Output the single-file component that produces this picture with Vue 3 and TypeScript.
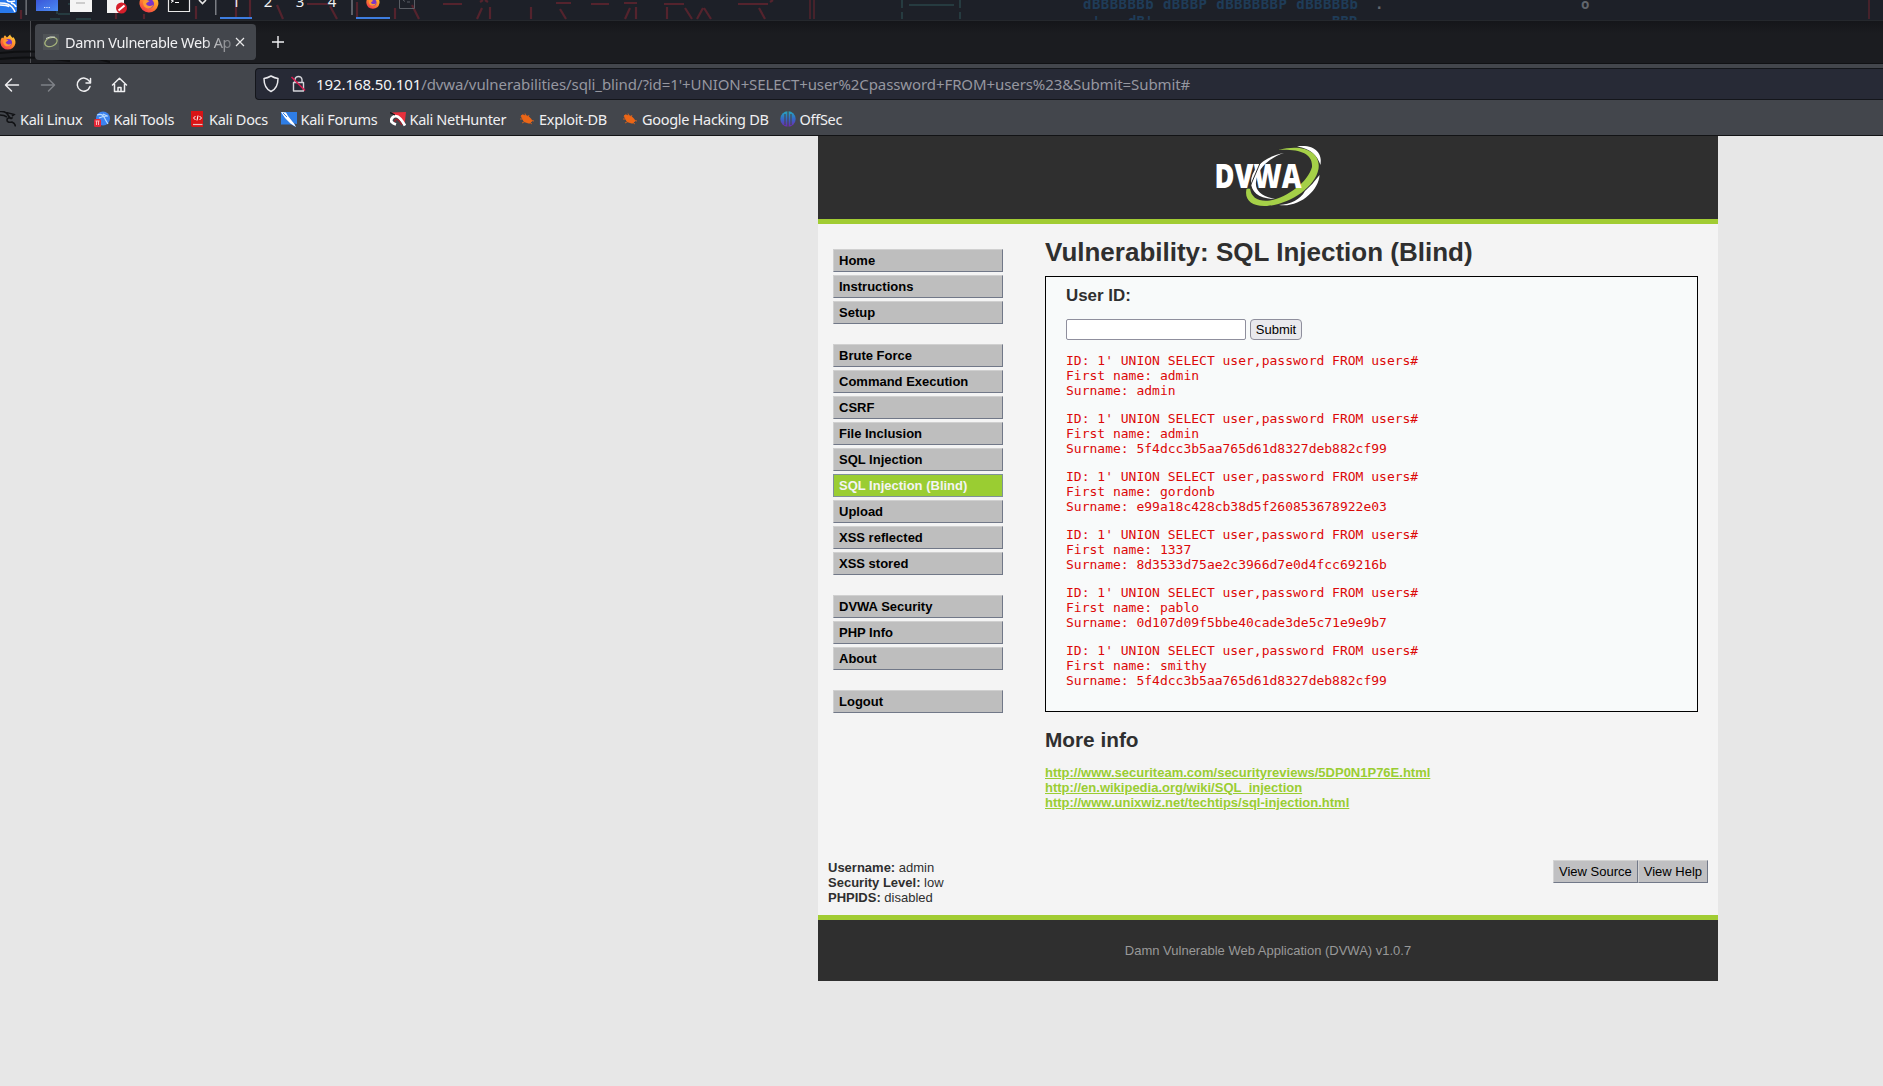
<script setup lang="ts">
interface Bookmark {
  icon: string
  label: string
  width: number
}
interface Row {
  first: string
  surname: string
}

const bookmarks: Bookmark[] = [
  { icon: 'dragon', label: 'Kali Linux', width: 93.5 },
  { icon: 'tools', label: 'Kali Tools', width: 95.5 },
  { icon: 'docs', label: 'Kali Docs', width: 91.5 },
  { icon: 'forums', label: 'Kali Forums', width: 109 },
  { icon: 'nethunter', label: 'Kali NetHunter', width: 129.5 },
  { icon: 'bug', label: 'Exploit-DB', width: 103 },
  { icon: 'bug', label: 'Google Hacking DB', width: 157.5 },
  { icon: 'offsec', label: 'OffSec', width: 64 },
]

const menu: string[][] = [
  ['Home', 'Instructions', 'Setup'],
  ['Brute Force', 'Command Execution', 'CSRF', 'File Inclusion', 'SQL Injection', 'SQL Injection (Blind)', 'Upload', 'XSS reflected', 'XSS stored'],
  ['DVWA Security', 'PHP Info', 'About'],
  ['Logout'],
]
const selected = 'SQL Injection (Blind)'

const rows: Row[] = [
  { first: 'admin', surname: 'admin' },
  { first: 'admin', surname: '5f4dcc3b5aa765d61d8327deb882cf99' },
  { first: 'gordonb', surname: 'e99a18c428cb38d5f260853678922e03' },
  { first: '1337', surname: '8d3533d75ae2c3966d7e0d4fcc69216b' },
  { first: 'pablo', surname: '0d107d09f5bbe40cade3de5c71e9e9b7' },
  { first: 'smithy', surname: '5f4dcc3b5aa765d61d8327deb882cf99' },
]

const links: string[] = [
  'http://www.securiteam.com/securityreviews/5DP0N1P76E.html',
  'http://en.wikipedia.org/wiki/SQL_injection',
  'http://www.unixwiz.net/techtips/sql-injection.html',
]
</script>

<template>
  <div class="screen">
    <svg width="0" height="0" class="defs" aria-hidden="true">
      <defs>
        <linearGradient id="fox" x1="0.8" y1="0" x2="0.2" y2="1">
          <stop offset="0" stop-color="#ffd43a" />
          <stop offset="0.5" stop-color="#ff8a2a" />
          <stop offset="1" stop-color="#f0304e" />
        </linearGradient>
        <linearGradient id="sea" x1="0" y1="0" x2="0" y2="1">
          <stop offset="0" stop-color="#25a8bd" />
          <stop offset="0.5" stop-color="#3568c8" />
          <stop offset="1" stop-color="#7028b0" />
        </linearGradient>
        <linearGradient id="desk" x1="0" y1="0" x2="1" y2="1">
          <stop offset="0" stop-color="#3a56d8" />
          <stop offset="1" stop-color="#4b8cf4" />
        </linearGradient>
        <symbol id="firefox" viewBox="0 0 16 16">
          <path d="M5 1.2C6 2 6.3 3 7 3.4L10.2 0.6C10.5 2.4 12 3 12.6 4L13.2 3C15 5 15.8 7 15.4 9.4A7.6 7.6 0 0 1 .4 9C.2 6.6.9 5 2 3.6L3.5 4.3C3.6 3 4 2 5 1.2Z" fill="url(#fox)" />
          <circle cx="8.3" cy="8.6" r="3.7" fill="#7a35c8" />
          <path d="M3.6 6.2C5.5 5 7.5 5.6 8.4 6.8 6.8 7 6.5 8 5.6 8.6 6.6 10.6 9 11 11.4 9.4 10.6 12.2 7 13.2 4.8 11.4 3.2 10 3 8 3.6 6.2Z" fill="#ff9a32" />
        </symbol>
      </defs>
    </svg>

    <header class="panel">
      <svg class="wallpaper" width="1883" height="20" viewBox="0 0 1883 20">
        <g fill="none" stroke="#54232d" stroke-width="2.2">
          <path d="M21 10V19M116 11V19M144 14V19M196 6V19M236 0V19M250 0V19M277 5l6 14M307 4h21M330 6l7 13M357 2V19M395 8V19M412 5l7 14M443 4h19M482 8l-5 11M490 7V19M480 2l3-2M488 2l-3-2M531 7V19M556 3h15M560 9l6 10M591 4h18M630 8l-5 11M636 7V19M624 3h13M664 4h20M667 7V19M685 8l7 11M703 8l-6 11M704 8l7 11M738 4h30M759 8l6 11M770 2l3-2" />
          <path d="M810 0V19M814 0V19M1869 0V19" stroke-width="1.5" />
        </g>
        <path d="M902 0V8M902 12V19M960 0V8M960 12V19M909 5H954M57 5V14M68 4H83M50 19H60M76 19H91M58 14H70" fill="none" stroke="#263b40" stroke-width="2" />
        <g class="ascii" fill="#1f3c58">
          <text x="1083" y="8.5" textLength="275" xml:space="preserve">dBBBBBBb  dBBBP dBBBBBBP dBBBBBb</text>
          <text x="1092" y="26">'</text>
          <text x="1128" y="26">dB'</text>
          <text x="1332" y="26">BBP</text>
          <text x="1375" y="8.5" fill="#62666d">.</text>
          <text x="1581" y="8.5" fill="#62666d">o</text>
        </g>
      </svg>
      <svg class="launch" width="216" height="20" viewBox="0 0 216 20">
        <path d="M0 0H17V10Q17 13 14 13H0Z" fill="#2879ec" />
        <path d="M0 3C5 3 11 3 15 12M7 0Q8 3 15 1M11 3Q15 4 16 7M0 5Q8 5 9 7" fill="none" stroke="#fff" stroke-width="1.6" />
        <rect x="25.5" width="1.3" height="15" fill="#7a7d83" />
        <rect x="36" width="22" height="11" fill="url(#desk)" />
        <path d="M44 7.5h6" stroke="#dfe6ff" stroke-width="1.2" stroke-dasharray="1.3 1" />
        <rect x="70" width="22" height="12" fill="#f4f4f4" />
        <path d="M76 3h9" stroke="#b9b9b9" stroke-width="1.3" />
        <path d="M107 0H124V13H107Z" fill="#f4f4f4" />
        <circle cx="121.500" cy="8" r="5.500" fill="#d61f2b" />
        <path d="M118.500 10.500l6-5" stroke="#fff" stroke-width="2" />
        <use href="#firefox" x="139" y="-7" width="20" height="20" />
        <path d="M168.500-2V11.500H189.500V-2" fill="#16181b" stroke="#e8e8e8" stroke-width="1.2" />
        <path d="M171 0l2.500 1L171 2.500M175 2.500h4" fill="none" stroke="#fff" />
        <path d="M199 0l3.500 3.500L206 0" fill="none" stroke="#e6e6e6" stroke-width="1.6" />
        <rect x="215" width="1.5" height="15" fill="#7a7d83" />
      </svg>
      <nav class="spaces">
        <span class="space current">1</span>
        <span class="space">2</span>
        <span class="space">3</span>
        <span class="space">4</span>
      </nav>
      <svg class="tasks" width="70" height="20" viewBox="350 0 70 20">
        <rect x="351.300" width="1.400" height="15" fill="#7a7d83" />
        <rect x="356" y="17" width="34" height="2" fill="#3d7de0" />
        <use href="#firefox" x="366" y="-5" width="14" height="14" />
        <path d="M399.500-4V8.500H414.500V-4M403 0l2 1.500M407 2h3" fill="none" stroke="#5a5d64" />
      </svg>
    </header>

    <div class="tabbar">
      <div class="pinned">
        <svg class="shade" width="110" height="20" viewBox="0 0 110 20"><path d="M0 10Q30 7 60 10T110 19M0 16Q30 12 70 18" fill="none" stroke="#0e0f11" stroke-width="2" /></svg>
        <svg class="pin" width="16" height="16"><use href="#firefox" width="16" height="16" /></svg>
      </div>
      <div class="tab">
        <svg width="16" height="16" viewBox="0 0 16 16">
          <rect width="16" height="16" fill="#4f5356" />
          <ellipse cx="8" cy="8" rx="6.400" ry="4.300" transform="rotate(-22 8 8)" fill="none" stroke="#a5b37b" stroke-width="1.300" />
          <path d="M3 4.500Q7 2 12 3.200" fill="none" stroke="#d5d8cf" />
        </svg>
        <span class="tab-title">Damn Vulnerable Web Ap</span>
        <svg class="close" width="10" height="10" viewBox="0 0 10 10"><path d="M1 1l8 8M9 1L1 9" stroke="#e8e8ea" stroke-width="1.200" /></svg>
      </div>
      <svg class="plus" width="12" height="12" viewBox="0 0 12 12"><path d="M6 0V12M0 6H12" stroke="#f0f0f2" stroke-width="1.400" /></svg>
    </div>

    <div class="toolbar">
      <svg width="130" height="32" viewBox="0 0 130 32" fill="none" stroke="#eeeef0" stroke-width="1.500" stroke-linecap="round" stroke-linejoin="round">
        <path d="M18.500 17H6M11.500 11L5.500 17L11.500 23" />
        <path d="M41.500 17H54M48.500 11L54.500 17L48.500 23" stroke="#7e8187" />
        <path d="M89.500 13.500A6.500 6.500 0 1 0 90 18.500M90.500 10.500V15H86" />
        <path d="M112.500 17L119.500 10.300L126.500 17M114.500 16V23.500H124.500V16M118 23V19.500H121V23" />
      </svg>
      <div class="url">
        <svg width="44" height="20" viewBox="0 0 44 20" fill="none" stroke-linejoin="round">
          <path d="M7 2Q10.500 4 14 4.500C14 11 11.500 15.500 7 17.500 2.500 15.500 0 11 0 4.500Q3.500 4 7 2Z" transform="translate(1 0)" stroke="#e8e8ec" stroke-width="1.500" />
          <path d="M30.500 8.500H40.500V17H30.500ZM32 8.500V5.500Q32.500 2.500 35.500 2.500T39 5.500V8.500" stroke="#d5d5da" stroke-width="1.400" />
          <path d="M28.500 3L42 16.500" stroke="#d81c50" stroke-width="1.600" />
        </svg>
        <span class="address"><b>192.168.50.101</b>/dvwa/vulnerabilities/sqli_blind/?id=1'+UNION+SELECT+user%2Cpassword+FROM+users%23&amp;Submit=Submit#</span>
      </div>
    </div>

    <div class="bookmarks">
      <div v-for="b in bookmarks" :key="b.label" class="bookmark" :style="{ width: b.width + 'px' }">
        <svg width="16" height="16" viewBox="0 0 16 16">
          <g v-if="b.icon === 'dragon'" fill="none" stroke="#111215" stroke-width="1.600">
            <path d="M-2 1Q5-1 8 4T12 7Q7 6 7 9T12 11Q15 12 15.500 15.500M-1 4Q4 4 7 6M4 1Q9 2 14 3.500L12 5" />
          </g>
          <g v-else-if="b.icon === 'tools'">
            <circle cx="9" cy="7.500" r="7" fill="#3c82ee" />
            <path d="M3 4Q8 2 10 6T14 13M5 7Q9 5 14 5M9 3l4 2" fill="none" stroke="#b9dcff" stroke-width="1.200" />
            <rect y="8" width="7" height="8" rx="1.500" fill="#e32636" />
            <path d="M1.500 10h4M2.500 10v4M4.500 10v4" stroke="#ffb5b5" />
          </g>
          <g v-else-if="b.icon === 'docs'">
            <path d="M2 0H14V13H4V14H14V16H3.500Q2 16 2 14Z" fill="#d81416" />
            <path d="M4 13.500H13.500" stroke="#e9c0c0" stroke-width="1.200" />
            <path d="M6.500 5L4.500 7l2 2M10.500 5l2 2-2 2M9 4.500L8 9.500" fill="none" stroke="#fff" />
          </g>
          <g v-else-if="b.icon === 'forums'">
            <path d="M0 1H16V13L13 12.500 15 16 10 13.500H0Z" fill="#2f7ee6" />
            <path d="M0 1L5 1.500 7 5 13 12.500 15 16 9.500 12.500 4 7Z" fill="#fff" />
            <path d="M2 2L6 6" stroke="#2f7ee6" stroke-width="1" />
          </g>
          <g v-else-if="b.icon === 'nethunter'">
            <path d="M2 1.500L16 1L14.500 14L9 8Z" fill="#e8303c" />
            <path d="M6 13.500Q0 11.500 1.500 8Q3.500 4 7.500 5.500Q10.500 7 15 14.500" fill="none" stroke="#fff" stroke-width="2.800" />
            <path d="M5 11Q4.500 8 7.500 8.500Q9.500 9.500 12 14" fill="none" stroke="#a51d2a" stroke-width="1.300" />
            <path d="M0 1.500L5 4" stroke="#111215" stroke-width="1.200" />
          </g>
          <g v-else-if="b.icon === 'bug'" fill="#ec6616" stroke="#ec6616" stroke-width=".8">
            <path d="M2 5Q3 3 6 4.500Q11 5 13 10Q11 13.500 7.500 11.500Q4 10.500 4 8.500Z" />
            <path d="M1 8L5 8M3 12L7 10M6 2.500L7 5M10 4L9 6M10 9l5 1M10 11l3 2" fill="none" />
          </g>
          <g v-else>
            <circle cx="8" cy="8" r="7.700" fill="url(#sea)" />
            <path d="M8 0V16M5 3V14M11 3V14" stroke="#444850" stroke-width="1.200" />
          </g>
        </svg>
        <span>{{ b.label }}</span>
      </div>
    </div>

    <main class="page">
      <div class="container">
        <div class="header">
          <svg width="110" height="68" viewBox="0 0 110 68">
            <path d="M82 4.500C98 2 108 10 105.500 23C102 13 96 7 82 4.500Z" fill="#fff" />
            <path d="M63 8C90 1 106 11 103.500 27C100 45 76 62 52 64C37 65 29 58 31.500 47L35 46C36 56 44 60 55 58.500C73 55 93 40 97 25C98 11 84 7 63 8Z" fill="#a5d048" />
            <path d="M69 11C50 14 36 27 36 40C36 50 44 57 60 57C47 54 40 49 41 40C42 28 53 16 69 11Z" fill="#fff" />
            <path d="M104.500 33C104 48 85 66 64 63C76 62 85 58 90 49Q98 42 104.500 33Z" fill="#fff" />
            <text x="-0.500" y="45.500" textLength="87" lengthAdjust="spacingAndGlyphs" class="logo-text">DVWA</text>
            <path d="M34 47L46 19" stroke="#2f2f2f" stroke-width="1" />
          </svg>
        </div>

        <div class="middle">
          <aside class="menu">
            <ul v-for="(group, i) in menu" :key="i">
              <li v-for="item in group" :key="item" :class="{ selected: item === selected }">{{ item }}</li>
            </ul>
          </aside>
          <section class="body">
            <h1>Vulnerability: SQL Injection (Blind)</h1>
            <div class="vulnerable">
              <h3>User ID:</h3>
              <form class="query" @submit.prevent>
                <input type="text" aria-label="User ID" />
                <button type="submit">Submit</button>
              </form>
              <pre v-for="(r, i) in rows" :key="i">ID: 1' UNION SELECT user,password FROM users#
First name: {{ r.first }}
Surname: {{ r.surname }}</pre>
            </div>
            <h2>More info</h2>
            <div class="links">
              <a v-for="l in links" :key="l">{{ l }}</a>
            </div>
          </section>
        </div>

        <div class="system">
          <div>
            <div><b>Username:</b> admin</div>
            <div><b>Security Level:</b> low</div>
            <div><b>PHPIDS:</b> disabled</div>
          </div>
          <div class="helpers"><span>View Source</span><span>View Help</span></div>
        </div>
        <footer>Damn Vulnerable Web Application (DVWA) v1.0.7</footer>
      </div>
    </main>
  </div>
</template>

<style>
body {
  background: #e7e7e7;
  overflow: hidden;
}
</style>

<style scoped>
* {
  box-sizing: border-box;
}
.screen {
  width: 1883px;
  height: 1086px;
  overflow: hidden;
  display: flex;
  flex-direction: column;
  font-family: 'Noto Sans', sans-serif;
  font-size: 15px;
  color: #f0f0f2;
}
svg {
  flex: none;
  display: block;
}
.defs {
  position: absolute;
}
.panel {
  position: relative;
  flex: none;
  display: flex;
  height: 21px;
  background: #1d2028;
  border-bottom: 1px solid #25282d;
  overflow: hidden;
}
.wallpaper {
  position: absolute;
  left: 0;
  top: 0;
}
.ascii {
  font-family: 'DejaVu Sans Mono', monospace;
  font-size: 14px;
  font-weight: bold;
}
.launch,
.spaces,
.tasks {
  position: relative;
}
.launch {
  overflow: visible;
  margin-right: 4px;
}
.spaces {
  display: flex;
  width: 130px;
}
.space {
  flex: none;
  width: 32px;
  height: 19px;
  line-height: 2px;
  text-align: center;
  border-bottom: 2px solid transparent;
}
.space.current {
  border-color: #3d7de0;
}
.tabbar {
  flex: none;
  height: 43px;
  background: linear-gradient(#15161a, #1b1c20 30%);
  border-bottom: 1px solid #101114;
  display: flex;
  align-items: center;
}
.pinned {
  position: relative;
  width: 31px;
  height: 42px;
  border-right: 1px solid #4c4d51;
  display: flex;
  align-items: center;
}
.pin {
  position: relative;
}
.shade {
  position: absolute;
  left: 0;
  bottom: 0;
}
.tab {
  position: relative;
  margin-left: 4px;
  width: 221px;
  height: 36px;
  border-radius: 4px;
  background: #43464c;
  display: flex;
  align-items: center;
  padding-left: 8px;
}
.tab-title {
  margin-left: 6px;
  width: 167px;
  overflow: hidden;
  white-space: nowrap;
  font-size: 14.5px;
  letter-spacing: -0.36px;
  mask-image: linear-gradient(to right, #000 138px, transparent 178px);
}
.close {
  margin-left: 3px;
}
.plus {
  margin-left: 16px;
}
.toolbar {
  flex: none;
  height: 40px;
  padding-top: 4px;
  background: #43464c;
  display: flex;
}
.url {
  margin-left: 125px;
  flex: 1;
  height: 32px;
  background: #272a36;
  border: 1px solid #14161b;
  border-right: 0;
  border-radius: 4px 0 0 4px;
  display: flex;
  align-items: center;
  padding-left: 7px;
}
.address {
  margin-left: 9px;
  color: #9697a0;
  letter-spacing: -0.09px;
  white-space: nowrap;
}
.address b {
  font-weight: normal;
  color: #f5f5f7;
}
.bookmarks {
  flex: none;
  height: 32px;
  padding-bottom: 1px;
  background: #43464c;
  border-bottom: 1px solid #121315;
  display: flex;
  align-items: center;
  font-size: 14.5px;
  letter-spacing: -0.3px;
}
.bookmark {
  flex: none;
  display: flex;
  align-items: center;
  gap: 4px;
  white-space: nowrap;
}
.page {
  flex: 1;
  background: #e7e7e7;
  padding-left: 818px;
  font-family: 'Liberation Sans', Arial, sans-serif;
  font-size: 13px;
  line-height: 15px;
  color: #2f2f2f;
}
.container {
  width: 900px;
  height: 845px;
  background: #f4f4f4;
  display: flex;
  flex-direction: column;
}
.header {
  height: 88px;
  background: #2f2f2f;
  border-bottom: 5px solid #a1cc33;
  display: flex;
  padding: 6px 0 0 397px;
}
.logo-text {
  font-family: 'Open Sans', sans-serif;
  font-weight: 800;
  font-size: 33.6px;
  fill: #fff;
}
.middle {
  flex: 1;
  display: flex;
}
.menu {
  width: 227px;
  padding: 25px 0 0 15px;
}
ul {
  list-style: none;
  margin: 0 0 20px;
  padding: 0;
  width: 170px;
  display: flex;
  flex-direction: column;
  gap: 3px;
}
li {
  height: 23px;
  padding: 3px 5px;
  background: #bebebe;
  border: 1px solid;
  border-color: #d0d0d0 #717888 #717888 #d0d0d0;
  font-weight: bold;
  color: #000;
}
li.selected {
  background: #9acd32;
  border-color: #7f9199;
  color: #f4f4f4;
}
.body {
  width: 653px;
}
h1 {
  margin: 13px 0 8px;
  font-size: 26px;
  line-height: 31px;
}
.vulnerable {
  height: 436px;
  background: #f8fafa;
  border: 1px solid #000;
  padding: 9px 20px 8px;
}
h3 {
  margin: 0 0 13px;
  font-size: 16.9px;
  line-height: 20px;
}
.query {
  display: flex;
  gap: 4px;
  margin-bottom: 13px;
}
input {
  width: 180px;
  height: 21px;
  border: 1px solid #8f8f9d;
  border-radius: 2px;
  background: #fff;
  padding: 0;
}
button {
  width: 52px;
  height: 21px;
  padding: 0;
  border: 1px solid #8f8f9d;
  border-radius: 4px;
  background: #e9e9ed;
  color: #000;
  font: 13px 'Liberation Sans', sans-serif;
}
pre {
  margin: 0 0 13px;
  font: 13px/15px 'DejaVu Sans Mono', monospace;
  color: #dc0808;
}
h2 {
  margin: 16px 0 13px;
  font-size: 20.8px;
  line-height: 24px;
}
.links {
  display: flex;
  flex-direction: column;
  align-items: flex-start;
}
.links a {
  color: #9acd32;
  font-weight: bold;
  text-decoration: underline;
}
.system {
  height: 55px;
  padding: 0 10px;
  display: flex;
  justify-content: space-between;
}
.helpers {
  display: flex;
}
.helpers span {
  height: 23px;
  padding: 3px 5px;
  background: #c0c0c2;
  border: 1px solid;
  border-color: #d4d4d4 #717888 #717888 #d4d4d4;
  color: #000;
}
footer {
  height: 66px;
  border-top: 5px solid #a1cc33;
  background: #2f2f2f;
  color: #999;
  text-align: center;
  line-height: 61px;
}
</style>
